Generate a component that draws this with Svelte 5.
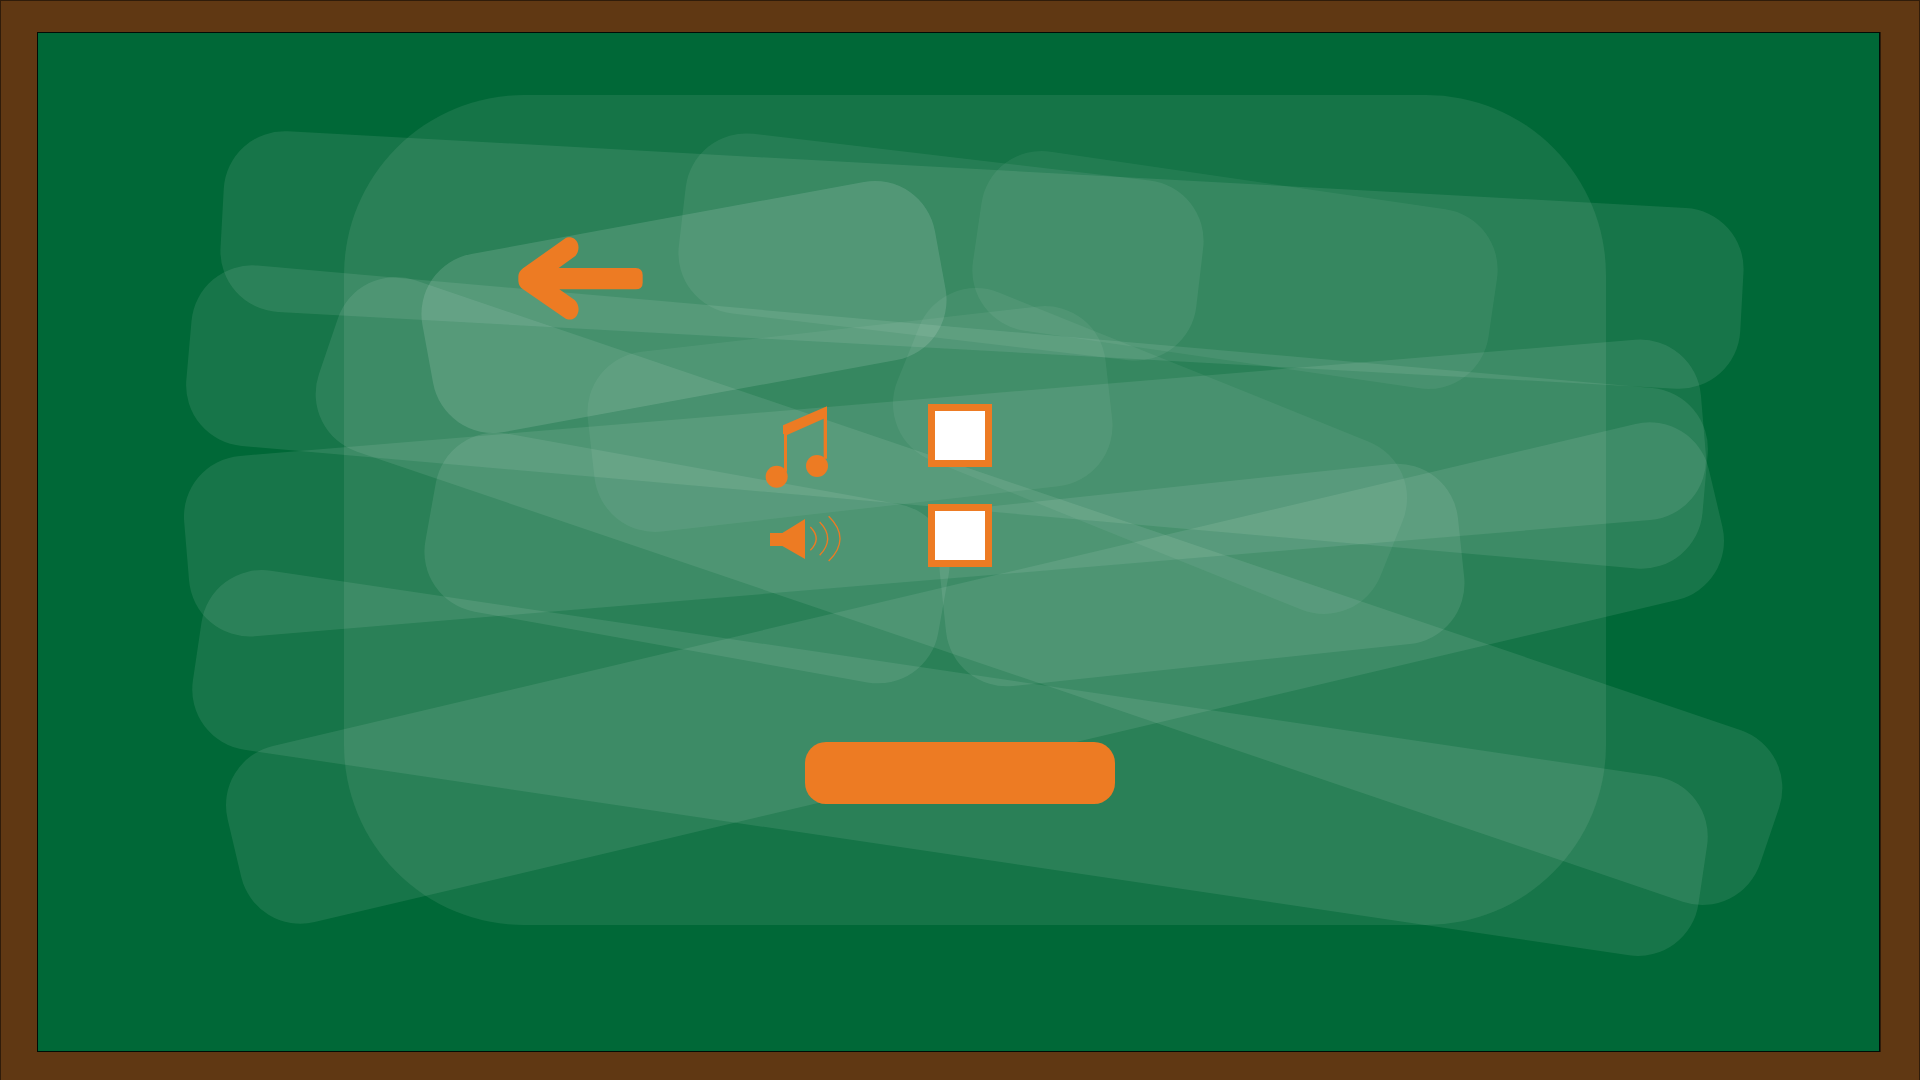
<script>
  let music = $state(false);
  let sound = $state(false);

  const long = { w: 1522, h: 181, r: 61 };
  const short = { w: 521, h: 181, r: 61 };

  // Chalk smears: centre, rotation in degrees, size and strength.
  const smears = [
    { x: 982, y: 259, a: 3.14, o: 0.09, ...long },
    { x: 947, y: 416, a: 5.02, o: 0.09, ...long },
    { x: 945, y: 487, a: -4.76, o: 0.09, ...long },
    { x: 950, y: 762, a: 8.44, o: 0.09, ...long },
    { x: 975, y: 672, a: -13.3, o: 0.09, ...long },
    { x: 1049, y: 590, a: 18.75, o: 0.09, ...long },
    { x: 684, y: 306, a: -10.39, o: 0.13, ...short },
    { x: 941, y: 246, a: 6.7, o: 0.07, ...short },
    { x: 1235, y: 269, a: 8.3, o: 0.06, ...short },
    { x: 850, y: 418, a: -6.5, o: 0.06, ...short },
    { x: 687, y: 557, a: 10.2, o: 0.09, ...short },
    { x: 1150, y: 450, a: 21.96, o: 0.06, ...short },
    { x: 1202, y: 574, a: -6.03, o: 0.09, ...short }
  ];
</script>

<main class="frame">
  <div class="board">
    <svg class="chalk" viewBox="38 32 1841 1018" preserveAspectRatio="none" aria-hidden="true">
      <rect x="344" y="94" width="1262" height="830" rx="180" fill="#fff" fill-opacity="0.083" />
      {#each smears as s}
        <rect
          x={-s.w / 2}
          y={-s.h / 2}
          width={s.w}
          height={s.h}
          rx={s.r}
          fill="#fff"
          fill-opacity={s.o}
          transform="translate({s.x} {s.y}) rotate({s.a})"
        />
      {/each}
    </svg>

    <div class="content">
      <button class="back" type="button" aria-label="Back">
        <svg viewBox="55 50 375 249" aria-hidden="true">
          <path
            d="M70 144 L195 55 C203 49 217 49 225 56 C239 67 241 91 227 107 L177 143 H408 Q429 144 429 164 V187 Q429 206 408 207 H179 L225 239 C240 253 241 278 226 292 C216 300 204 299 195 293 L70 207 Q57 198 56 182 V168 Q57 153 70 144 Z"
          />
        </svg>
      </button>

      <form class="options">
        <label class="option">
          <svg viewBox="72 42 240 252" role="img" aria-label="Music">
            <path d="M129 106 L261 49 V206 H251 V86 L141 135 V245 H132 V132 H129 Z" />
            <circle cx="110" cy="260" r="33" />
            <circle cx="231" cy="228" r="33" />
          </svg>
          <input type="checkbox" bind:checked={music} />
        </label>
        <label class="option">
          <svg viewBox="72 342 240 252" role="img" aria-label="Sound">
            <path d="M90 429 H127 L195 387 V507 L127 468 H90 Z" />
            <path class="wave" d="M211 411 Q246 446 211 481" />
            <path class="wave" d="M239 396 Q287 446 239 496" />
            <path class="wave" d="M266 379 Q334 446 266 513" />
          </svg>
          <input type="checkbox" bind:checked={sound} />
        </label>
      </form>

      <button class="confirm" type="button" aria-label="Confirm"></button>
    </div>
  </div>
</main>

<style>
  :global(body) {
    margin: 0;
  }

  .frame {
    box-sizing: border-box;
    min-height: 100vh;
    display: flex;
    padding: 31px 39px 28px 36px;
    background: #603813;
    border: 1px solid #301c0a;
    border-bottom: 0;
  }

  .board {
    position: relative;
    flex: 1;
    display: flex;
    justify-content: center;
    background: #006837;
    border: 1px solid #000c06;
    box-shadow: 1px 0 0 #301c0a;
  }

  .chalk {
    position: absolute;
    inset: 0;
    width: 100%;
    height: 100%;
  }

  .content {
    position: relative;
    width: 100%;
    max-width: 884px;
    margin-left: 3px;
    padding: 204px 0 40px;
    display: flex;
    flex-direction: column;
    align-items: center;
  }

  svg {
    display: block;
  }

  button {
    padding: 0;
    border: 0;
    background: none;
    cursor: pointer;
  }

  .back {
    align-self: flex-start;
  }

  .back svg {
    width: 125px;
    height: 83px;
    fill: #ed7b23;
  }

  .options {
    display: grid;
    gap: 16px;
    margin-top: 84px;
  }

  .option {
    display: grid;
    grid-template-columns: 80px 64px 80px;
    column-gap: 84px;
    align-items: start;
  }

  .option svg {
    width: 80px;
    height: 84px;
    fill: #ed7b23;
  }

  .option .wave {
    fill: none;
    stroke: #ed7b23;
    stroke-width: 4;
  }

  input {
    appearance: none;
    box-sizing: border-box;
    width: 64px;
    height: 63px;
    margin: 0;
    background: #fff;
    border: 7px solid #ed7b23;
    cursor: pointer;
  }

  input:checked {
    background: #ed7b23;
    box-shadow: inset 0 0 0 8px #fff;
  }

  .confirm {
    width: 310px;
    height: 62px;
    margin-top: 154px;
    border-radius: 21px;
    background: #ed7b23;
  }
</style>
